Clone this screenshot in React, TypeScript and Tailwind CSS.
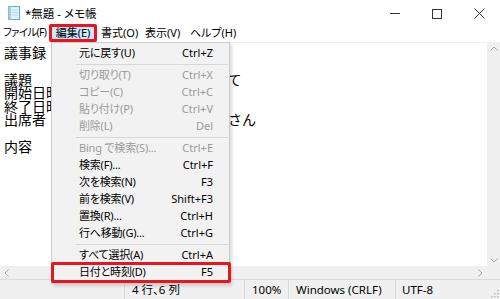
import React from "react";

type Item = { label: string; key: string; disabled?: boolean } | "sep";

const MENU: Item[] = [
  { label: "元に戻す(U)", key: "Ctrl+Z" },
  "sep",
  { label: "切り取り(T)", key: "Ctrl+X", disabled: true },
  { label: "コピー(C)", key: "Ctrl+C", disabled: true },
  { label: "貼り付け(P)", key: "Ctrl+V", disabled: true },
  { label: "削除(L)", key: "Del", disabled: true },
  "sep",
  { label: "Bing で検索(S)...", key: "Ctrl+E", disabled: true },
  { label: "検索(F)...", key: "Ctrl+F" },
  { label: "次を検索(N)", key: "F3" },
  { label: "前を検索(V)", key: "Shift+F3" },
  { label: "置換(R)...", key: "Ctrl+H" },
  { label: "行へ移動(G)...", key: "Ctrl+G" },
  "sep",
  { label: "すべて選択(A)", key: "Ctrl+A" },
  { label: "日付と時刻(D)", key: "F5" },
];

const LINES = [
  "議事録",
  "",
  "議題　　：来期の販売戦略案について",
  "開始日時：4月1日 10:00",
  "終了日時：4月1日 12:00",
  "出席者　：山田、佐藤、鈴木、高橋さん",
  "",
  "内容",
];

function NoteIcon() {
  return (
    <svg width="16" height="16" viewBox="0 0 16 16">
      <rect x="2.5" y="1.5" width="11" height="13" fill="#dff1f8" stroke="#6fa9c4" />
      <rect x="2.5" y="1.5" width="2.5" height="13" fill="#9fd0e4" />
      <path d="M6 5h6M6 7.5h6M6 10h6" stroke="#b9dbe8" />
    </svg>
  );
}

export default function App() {
  return (
    <div className="relative w-[500px] h-[299px] bg-white overflow-hidden flex flex-col font-['Noto_Sans','Noto_Sans_CJK_JP',sans-serif] text-black">
      {/* title bar */}
      <div className="h-[24px] flex items-center shrink-0 [font-feature-settings:'palt']">
        <div className="ml-[6px] mt-[2px]">
          <NoteIcon />
        </div>
        <span className="ml-[3px] mt-[3px] text-[11.5px]">*無題 - メモ帳</span>
        <div className="ml-auto flex items-center h-full mt-[3px]">
          <div className="w-[42px] flex justify-center">
            <div className="w-[10px] h-px bg-[#333]" />
          </div>
          <div className="w-[42px] flex justify-center">
            <div className="w-[10px] h-[10px] border border-[#333]" />
          </div>
          <div className="w-[42px] flex justify-center">
            <svg width="11" height="11" viewBox="0 0 11 11">
              <path d="M0.5 0.5l10 10M10.5 0.5l-10 10" stroke="#333" strokeWidth="1" />
            </svg>
          </div>
        </div>
      </div>

      {/* menu bar */}
      <div className="h-[18px] flex items-center text-[11px] shrink-0 relative whitespace-nowrap [font-feature-settings:'palt']">
        <span className="w-[49px] pl-[3px] text-[10.5px] tracking-[-0.7px]">ファイル(F)</span>
        <span className="w-[48px] h-[18px] flex items-center justify-center bg-[#cce8ff] ring-[3px] ring-[#e8151f] rounded-[2px] ring-inset">
          編集(E)
        </span>
        <span className="w-[48px] pl-[4px]">書式(O)</span>
        <span className="w-[45px]">表示(V)</span>
        <span>ヘルプ(H)</span>
      </div>

      {/* editor */}
      <div className="flex-1 flex border-t border-[#f0f0f0] min-h-0">
        <div className="flex-1 pl-[4px] pt-[3px] text-[14px] leading-[13.4px] whitespace-pre font-['Noto_Sans_CJK_JP',sans-serif]">
          {LINES.map((l, i) => (
            <div key={i} className="h-[13.4px]">
              {l || " "}
            </div>
          ))}
        </div>
        <div className="w-[13px] bg-[#f0f0f0] flex flex-col items-center justify-between py-[3px]">
          <svg width="8" height="5" viewBox="0 0 8 5">
            <path d="M0.5 4.5L4 1l3.5 3.5" fill="none" stroke="#a8a8a8" />
          </svg>
          <svg width="8" height="5" viewBox="0 0 8 5">
            <path d="M0.5 0.5L4 4l3.5-3.5" fill="none" stroke="#a8a8a8" />
          </svg>
        </div>
      </div>

      {/* horizontal scrollbar */}
      <div className="h-[13px] flex shrink-0">
        <div className="flex-1 bg-[#f0f0f0] flex items-center justify-between px-[4px]">
          <svg width="5" height="8" viewBox="0 0 5 8">
            <path d="M4.5 0.5L1 4l3.5 3.5" fill="none" stroke="#a8a8a8" />
          </svg>
          <svg width="5" height="8" viewBox="0 0 5 8">
            <path d="M0.5 0.5L4 4L0.5 7.5" fill="none" stroke="#a8a8a8" />
          </svg>
        </div>
        <div className="w-[13px] bg-[#f0f0f0]" />
      </div>

      {/* status bar */}
      <div className="h-[20px] bg-[#f0f0f0] border-t border-[#dadada] flex items-stretch text-[11.5px] shrink-0 whitespace-nowrap [font-feature-settings:'palt']">
        <div className="w-[125px] border-r border-[#dadada]" />
        <div className="w-[120px] pl-[7px] flex items-center border-r border-[#dadada]">4 行、6 列</div>
        <div className="w-[44px] pl-[7px] flex items-center border-r border-[#dadada]">100%</div>
        <div className="w-[107px] pl-[7px] flex items-center border-r border-[#dadada]">Windows (CRLF)</div>
        <div className="flex-1 pl-[6px] flex items-center">UTF-8</div>
        <div className="w-[10px] flex items-end justify-end pb-[1px] pr-[1px]">
          <svg width="8" height="8" viewBox="0 0 8 8" fill="#b8b8b8">
            <rect x="6" y="0" width="1.5" height="1.5" />
            <rect x="3" y="3" width="1.5" height="1.5" />
            <rect x="6" y="3" width="1.5" height="1.5" />
            <rect x="0" y="6" width="1.5" height="1.5" />
            <rect x="3" y="6" width="1.5" height="1.5" />
            <rect x="6" y="6" width="1.5" height="1.5" />
          </svg>
        </div>
      </div>

      {/* edit dropdown */}
      <div className="absolute left-[51px] top-[42px] w-[179px] bg-[#f2f2f2] border border-[#cccccc] shadow-[2px_2px_3px_rgba(0,0,0,0.15)] py-[2px] text-[11px] whitespace-nowrap [font-feature-settings:'palt']">
        {MENU.map((it, i) =>
          it === "sep" ? (
            <div key={i} className="h-[5px] flex items-center pl-[24px] pr-[1px]">
              <div className="h-px w-full bg-[#d7d7d7]" />
            </div>
          ) : (
            <div
              key={i}
              className={`h-[17px] flex items-center justify-between pl-[27px] pr-[16px] ${
                it.disabled ? "text-[#9a9a9a]" : "text-black"
              }`}
            >
              <span className="tracking-[-0.2px]">{it.label}</span>
              <span>{it.key}</span>
            </div>
          )
        )}
      </div>

      {/* highlight box on 日付と時刻 */}
      <div className="absolute left-[51px] top-[262px] w-[180px] h-[21px] border-[3px] border-[#e8151f] rounded-[2px]" />
    </div>
  );
}
